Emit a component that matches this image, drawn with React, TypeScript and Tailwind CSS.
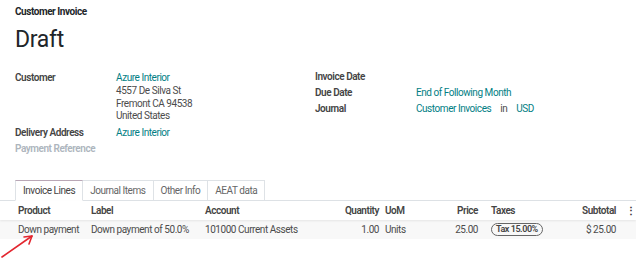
const address = ["4557 De Silva St", "Fremont CA 94538", "United States"];

const lines = [
  {
    product: "Down payment",
    label: "Down payment of 50.0%",
    account: "101000 Current Assets",
    quantity: "1.00",
    uom: "Units",
    price: "25.00",
    tax: "Tax 15.00%",
    subtotal: "$ 25.00",
  },
];

const tabs = ["Invoice Lines", "Journal Items", "Other Info", "AEAT data"];

const cols = "grid grid-cols-[91px_114px_115px_63px_57px_42px_78px_60px_16px]";

export default function App() {
  return (
    <div className="relative w-[636px] h-[258px] overflow-hidden bg-white text-[#4c4c4c] text-[10px] tracking-[-0.45px] leading-4 font-['Roboto','Liberation_Sans',sans-serif]">
      {/* Header */}
      <div className="px-[15px] pt-[5px]">
        <div className="font-bold text-[#212529] leading-[14px]">Customer Invoice</div>
        <h1 className="mt-[6px] text-[23px] leading-[30px] text-[#212529] tracking-[-0.3px]">Draft</h1>
      </div>

      {/* Fields */}
      <div className="grid grid-cols-[300px_1fr] px-[15px] mt-[16px]">
        <div>
          <div className="flex">
            <div className="w-[101px] font-semibold text-[#444] leading-[14px]">Customer</div>
            <div>
              <div className="text-[#017e84] leading-[14px]">Azure Interior</div>
              {address.map((v) => (
                <div key={v} className="leading-[12.5px]">{v}</div>
              ))}
            </div>
          </div>
          <div className="flex mt-[2.5px]">
            <div className="w-[101px] font-semibold text-[#444]">Delivery Address</div>
            <div className="text-[#017e84]">Azure Interior</div>
          </div>
          <div className="flex">
            <div className="w-[101px] font-semibold text-[#adb5bd]">Payment Reference</div>
          </div>
        </div>
        <div className="-mt-[2px] flex flex-col">
          <div className="flex">
            <div className="w-[101px] font-semibold text-[#444]">Invoice Date</div>
          </div>
          <div className="flex">
            <div className="w-[101px] font-semibold text-[#444]">Due Date</div>
            <div className="text-[#017e84]">End of Following Month</div>
          </div>
          <div className="flex">
            <div className="w-[101px] font-semibold text-[#444]">Journal</div>
            <div className="flex gap-[9px]">
              <span className="text-[#017e84]">Customer Invoices</span>
              <span>in</span>
              <span className="text-[#017e84]">USD</span>
            </div>
          </div>
        </div>
      </div>

      {/* Tabs */}
      <div className="mt-[23px] flex border-b border-[#dee2e6] pl-[15px] h-[21px]">
        {tabs.map((t, i) => (
          <div
            key={t}
            className={
              i === 0
                ? "-mb-px px-[7px] h-[21px] flex items-center bg-white border border-[#dee2e6] border-t-[#b9a7b6] border-b-white text-[#444]"
                : "-mb-px px-[7px] h-[21px] flex items-center border border-l-0 border-[#dee2e6] border-b-[#dee2e6] text-[#666]"
            }
          >
            {t}
          </div>
        ))}
      </div>

      {/* Table */}
      <div className={`${cols} h-[19px] items-center font-semibold text-[#444] shadow-[0_1px_2px_rgba(0,0,0,0.08)] relative`}>
        <div className="pl-[18px]">Product</div>
        <div>Label</div>
        <div>Account</div>
        <div className="text-right pr-[4px]">Quantity</div>
        <div className="pl-[2px]">UoM</div>
        <div className="text-right pr-[4px]">Price</div>
        <div className="pl-[9px]">Taxes</div>
        <div className="text-right pr-[4px]">Subtotal</div>
        <div className="flex justify-center pl-[6px] font-black text-[#333]">⋮</div>
      </div>
      {lines.map((l) => (
        <div key={l.product} className={`${cols} h-[19px] items-center bg-[#f8f8f8]`}>
          <div className="pl-[18px]">{l.product}</div>
          <div>{l.label}</div>
          <div>{l.account}</div>
          <div className="text-right pr-[4px]">{l.quantity}</div>
          <div className="pl-[2px]">{l.uom}</div>
          <div className="text-right pr-[4px]">{l.price}</div>
          <div className="pl-[9px] flex">
            <span className="rounded-full border-[1.5px] border-[#666] px-[4px] leading-[11px] text-[9px] font-semibold text-[#444]">
              {l.tax}
            </span>
          </div>
          <div className="text-right pr-[4px]">{l.subtotal}</div>
          <div />
        </div>
      ))}

      {/* Annotation arrow */}
      <svg className="absolute left-0 top-[230px]" width="40" height="28" viewBox="0 0 40 28">
        <line x1="2" y1="27" x2="32" y2="6" stroke="#e3262f" strokeWidth="1.6" strokeLinecap="round" />
        <polyline points="24,7 32,6 29,14" fill="none" stroke="#e3262f" strokeWidth="1.6" strokeLinecap="round" strokeLinejoin="round" />
      </svg>
    </div>
  );
}
